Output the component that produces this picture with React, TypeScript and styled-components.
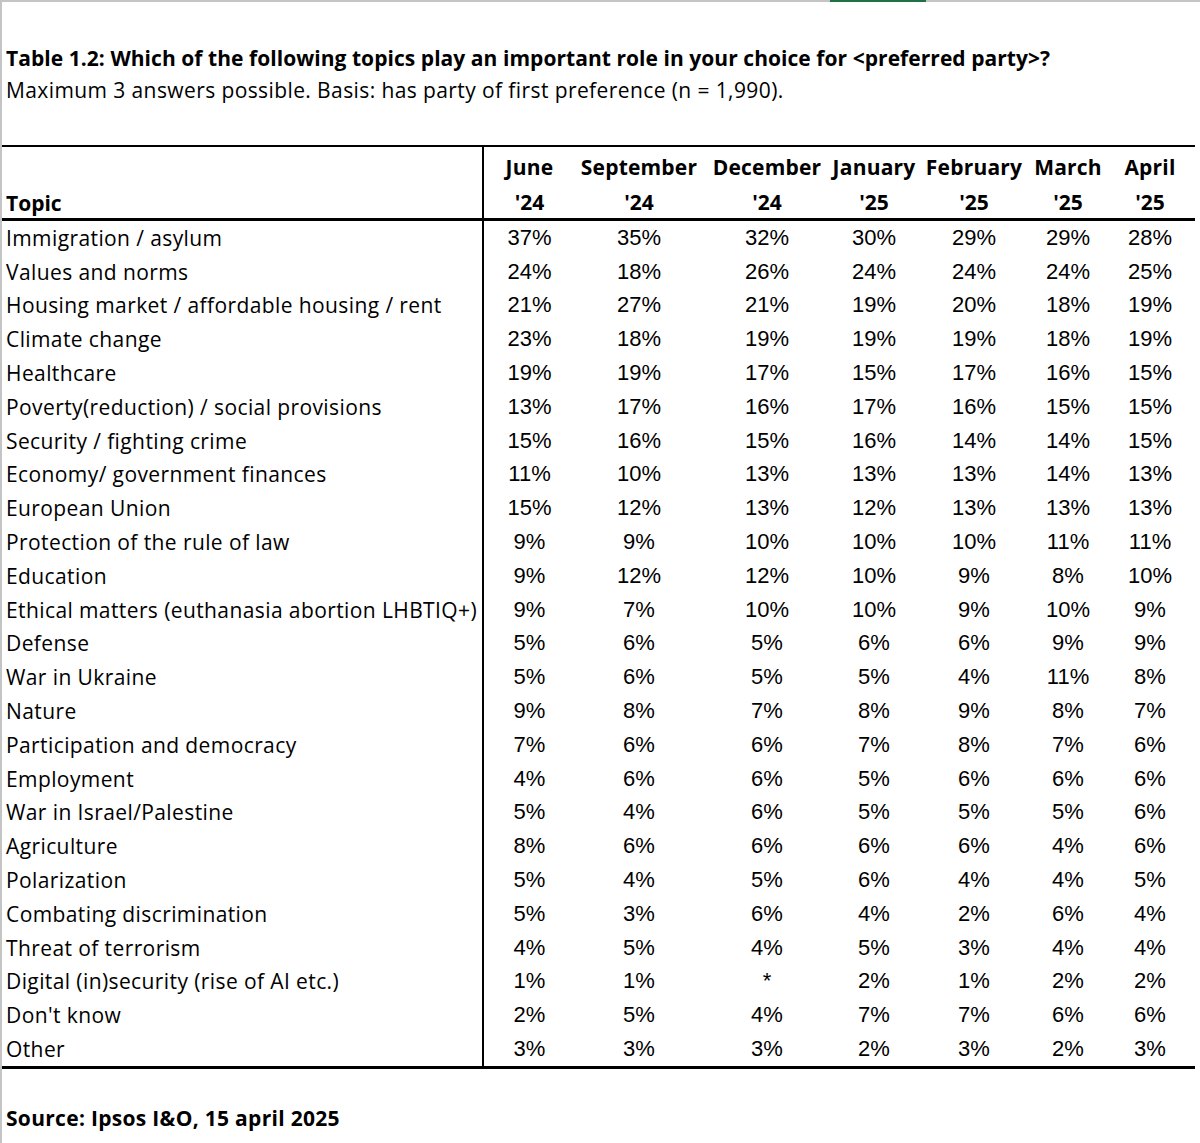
import React from "react";
import styled, { createGlobalStyle } from "styled-components";

const GlobalStyle = createGlobalStyle`
  html, body {
    margin: 0;
    padding: 0;
    background: #ffffff;
  }
  body {
    font-family: "Open Sans", Roboto, "Liberation Sans", sans-serif;
    color: #000;
  }
`;

const months = [
  { name: "June", year: "'24", width: 92 },
  { name: "September", year: "'24", width: 128 },
  { name: "December", year: "'24", width: 128 },
  { name: "January", year: "'25", width: 86 },
  { name: "February", year: "'25", width: 114 },
  { name: "March", year: "'25", width: 74 },
  { name: "April", year: "'25", width: 90 },
];

const rows: Array<[string, string[]]> = [
  ["Immigration / asylum", ["37%", "35%", "32%", "30%", "29%", "29%", "28%"]],
  ["Values and norms", ["24%", "18%", "26%", "24%", "24%", "24%", "25%"]],
  ["Housing market / affordable housing / rent", ["21%", "27%", "21%", "19%", "20%", "18%", "19%"]],
  ["Climate change", ["23%", "18%", "19%", "19%", "19%", "18%", "19%"]],
  ["Healthcare", ["19%", "19%", "17%", "15%", "17%", "16%", "15%"]],
  ["Poverty(reduction) / social provisions", ["13%", "17%", "16%", "17%", "16%", "15%", "15%"]],
  ["Security / fighting crime", ["15%", "16%", "15%", "16%", "14%", "14%", "15%"]],
  ["Economy/ government finances", ["11%", "10%", "13%", "13%", "13%", "14%", "13%"]],
  ["European Union", ["15%", "12%", "13%", "12%", "13%", "13%", "13%"]],
  ["Protection of the rule of law", ["9%", "9%", "10%", "10%", "10%", "11%", "11%"]],
  ["Education", ["9%", "12%", "12%", "10%", "9%", "8%", "10%"]],
  ["Ethical matters (euthanasia abortion LHBTIQ+)", ["9%", "7%", "10%", "10%", "9%", "10%", "9%"]],
  ["Defense", ["5%", "6%", "5%", "6%", "6%", "9%", "9%"]],
  ["War in Ukraine", ["5%", "6%", "5%", "5%", "4%", "11%", "8%"]],
  ["Nature", ["9%", "8%", "7%", "8%", "9%", "8%", "7%"]],
  ["Participation and democracy", ["7%", "6%", "6%", "7%", "8%", "7%", "6%"]],
  ["Employment", ["4%", "6%", "6%", "5%", "6%", "6%", "6%"]],
  ["War in Israel/Palestine", ["5%", "4%", "6%", "5%", "5%", "5%", "6%"]],
  ["Agriculture", ["8%", "6%", "6%", "6%", "6%", "4%", "6%"]],
  ["Polarization", ["5%", "4%", "5%", "6%", "4%", "4%", "5%"]],
  ["Combating discrimination", ["5%", "3%", "6%", "4%", "2%", "6%", "4%"]],
  ["Threat of terrorism", ["4%", "5%", "4%", "5%", "3%", "4%", "4%"]],
  ["Digital (in)security (rise of AI etc.)", ["1%", "1%", "*", "2%", "1%", "2%", "2%"]],
  ["Don't know", ["2%", "5%", "4%", "7%", "7%", "6%", "6%"]],
  ["Other", ["3%", "3%", "3%", "2%", "3%", "2%", "3%"]],
];

export default function App() {
  return (
    <Sheet>
      <GlobalStyle />
      <TopEdge>
        <ActiveTab />
      </TopEdge>
      <Body>
        <Title>Table 1.2: Which of the following topics play an important role in your choice for &lt;preferred party&gt;?</Title>
        <Subtitle>Maximum 3 answers possible. Basis: has party of first preference (n = 1,990).</Subtitle>

        <Table>
          <colgroup>
            <col style={{ width: 481 }} />
            {months.map((m) => (
              <col key={m.name} style={{ width: m.width }} />
            ))}
          </colgroup>
          <thead>
            <tr>
              <TopicHead rowSpan={2}>Topic</TopicHead>
              {months.map((m, i) => (
                <MonthHead key={m.name} $first={i === 0}>
                  {m.name}
                </MonthHead>
              ))}
            </tr>
            <tr>
              {months.map((m, i) => (
                <YearHead key={m.name} $first={i === 0}>
                  {m.year}
                </YearHead>
              ))}
            </tr>
          </thead>
          <tbody>
            {rows.map(([topic, values]) => (
              <tr key={topic}>
                <TopicCell>{topic}</TopicCell>
                {values.map((v, i) => (
                  <ValueCell key={i} $first={i === 0}>
                    {v}
                  </ValueCell>
                ))}
              </tr>
            ))}
          </tbody>
        </Table>

        <Source>Source: Ipsos I&amp;O, 15 april 2025</Source>
      </Body>
    </Sheet>
  );
}

const Sheet = styled.main`
  width: 1200px;
  height: 1143px;
  overflow: hidden;
  border-left: 2px solid #c4c4c4;
  box-sizing: border-box;
  background: #fff;
`;

const TopEdge = styled.div`
  height: 2px;
  background: #c4c4c4;
  position: relative;
`;

const ActiveTab = styled.div`
  position: absolute;
  left: 828px;
  top: 0;
  width: 96px;
  height: 2px;
  background: #1e7145;
`;

const Body = styled.div`
  padding: 40px 5px 0 0;
`;

const Title = styled.h1`
  margin: 0 0 0 4px;
  font-size: 21px;
  font-weight: 700;
  line-height: 32px;
  letter-spacing: 0.05px;
  white-space: nowrap;
`;

const Subtitle = styled.p`
  margin: 0 0 0 4px;
  font-size: 21px;
  font-weight: 400;
  line-height: 32px;
  letter-spacing: 0.4px;
`;

const Table = styled.table`
  margin-top: 39px;
  width: 1193px;
  border-collapse: collapse;
  table-layout: fixed;
  border-top: 2px solid #000;
  border-bottom: 3px solid #000;
`;

const TopicHead = styled.th`
  text-align: left;
  vertical-align: bottom;
  padding: 0 0 0 4px;
  height: 34px;
  font-size: 21px;
  font-weight: 700;
  border-bottom: 3px solid #000;
  line-height: 30px;
`;

const MonthHead = styled.th<{ $first?: boolean }>`
  text-align: center;
  font-size: 21px;
  font-weight: 700;
  height: 36px;
  padding: 2px 0 0;
  line-height: 30px;
  letter-spacing: 0.2px;
  white-space: nowrap;
  border-left: ${(p) => (p.$first ? "2px solid #000" : "none")};
`;

const YearHead = styled.th<{ $first?: boolean }>`
  text-align: center;
  font-size: 21px;
  font-weight: 700;
  height: 33px;
  padding: 0;
  line-height: 30px;
  border-bottom: 3px solid #000;
  border-left: ${(p) => (p.$first ? "2px solid #000" : "none")};
`;

const TopicCell = styled.td`
  height: 33.8px;
  padding: 0 0 0 4px;
  font-size: 21px;
  line-height: 30px;
  letter-spacing: 0.4px;
  white-space: nowrap;
`;

const ValueCell = styled.td<{ $first?: boolean }>`
  height: 33.8px;
  padding: 0;
  text-align: center;
  font-family: "Liberation Sans", Arial, sans-serif;
  font-size: 22px;
  line-height: 30px;
  border-left: ${(p) => (p.$first ? "2px solid #000" : "none")};
`;

const Source = styled.p`
  margin: 33px 0 0 4px;
  font-size: 21px;
  font-weight: 700;
  line-height: 32px;
  letter-spacing: 0.3px;
`;
